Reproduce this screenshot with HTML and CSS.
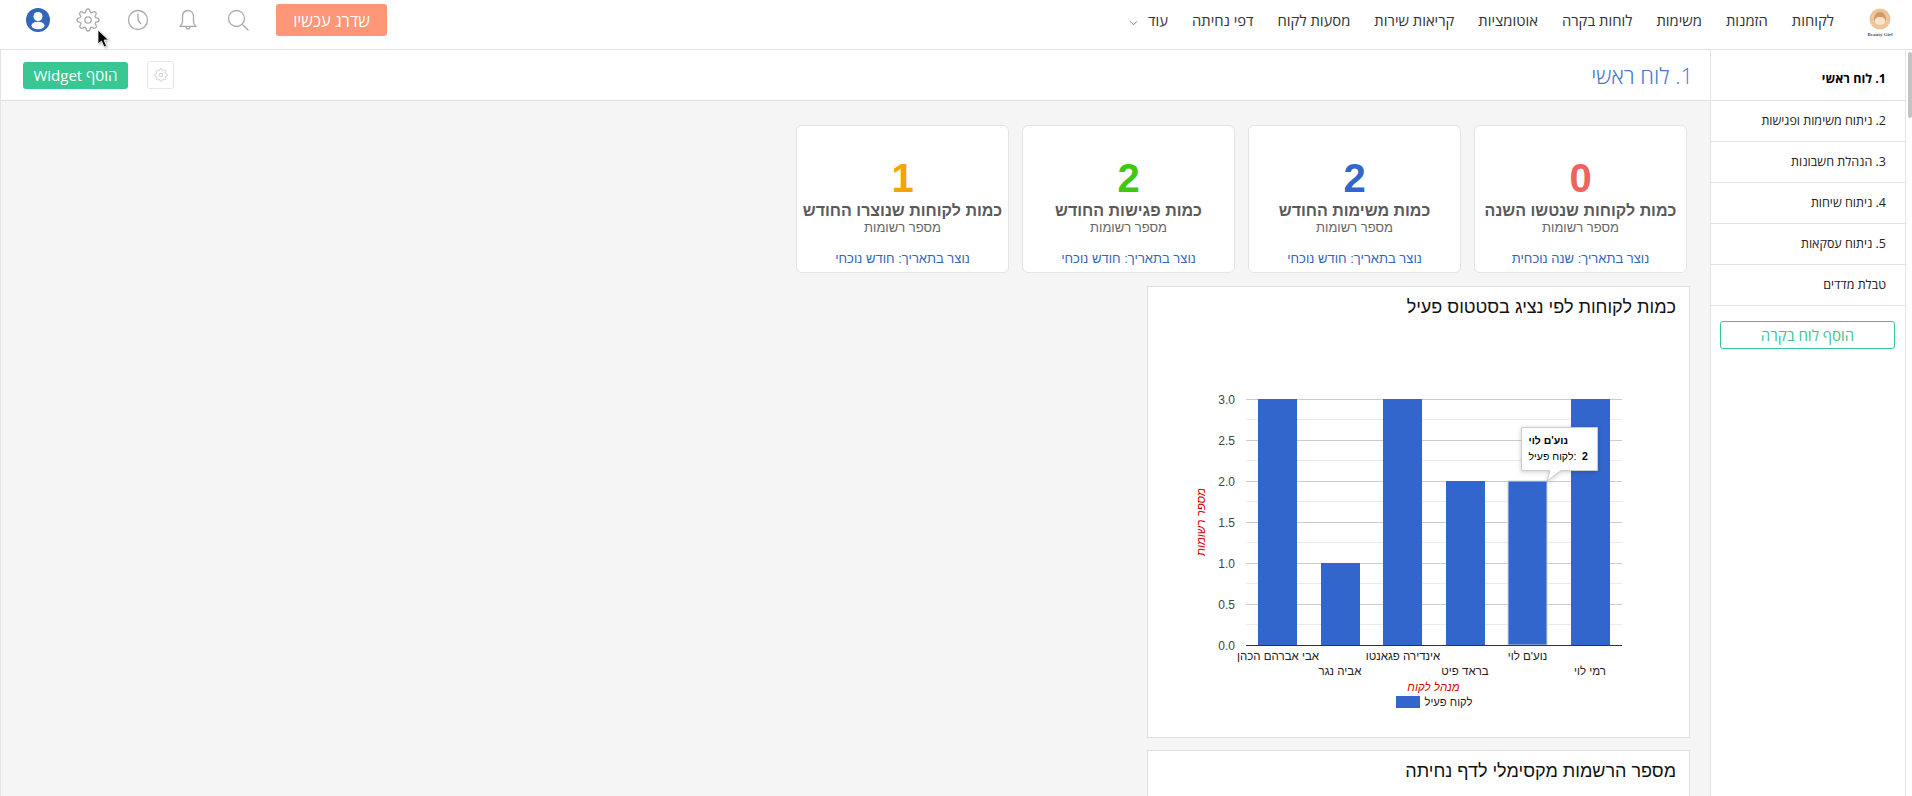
FILE: index.html
```html
<!DOCTYPE html>
<html lang="he" dir="rtl">
<head>
<meta charset="utf-8">
<title>לוח ראשי</title>
<link rel="stylesheet" href="styles.css">
</head>
<body>
<header class="topbar">
  <svg class="logo" viewBox="0 0 28 36" aria-label="Beauty Girl">
    <circle cx="14" cy="13" r="10.5" fill="#eec49a"/>
    <circle cx="14" cy="13" r="6" fill="#f8e3cf"/>
    <path d="M8 16c-1-7 3-10 6-10s7 3 6 10c-1-3-2-5-6-5s-5 2-6 5z" fill="#d59a63"/>
    <text x="14" y="30" class="logo-text">Beauty Girl</text>
  </svg>
  <nav class="nav">
    <a>לקוחות</a><a>הזמנות</a><a>משימות</a><a>לוחות בקרה</a><a>אוטומציות</a><a>קריאות שירות</a><a>מסעות לקוח</a><a>דפי נחיתה</a>
    <a class="nav-more">עוד
      <svg class="chevron" viewBox="0 0 10 6"><path d="M1 1l4 4 4-4"/></svg>
    </a>
  </nav>
  <div class="actions">
    <button class="upgrade">שדרג עכשיו</button>
    <svg class="icon" viewBox="0 0 24 24"><circle cx="10.5" cy="10.5" r="8"/><path d="M16.5 16.5l6 6"/></svg>
    <svg class="icon" viewBox="0 0 24 24"><path d="M12 2.5c-3.6 0-5.5 2.8-5.5 6.3v5.2c0 2-1.2 3.2-2.3 4.4h15.6c-1.1-1.2-2.3-2.4-2.3-4.4V8.800c0-3.500-1.900-6.300-5.500-6.300z"/><path d="M10 19c0 2.600 4 2.600 4 0"/></svg>
    <svg class="icon" viewBox="0 0 24 24"><circle cx="12" cy="12" r="9.500"/><path d="M12 5.500V12l3 4"/></svg>
    <svg class="icon" viewBox="0 0 24 24"><circle cx="12" cy="12" r="3.200"/><path d="M19.400 15a1.650 1.650 0 0 0 .33 1.820l.06.06a2 2 0 1 1-2.830 2.830l-.06-.06a1.650 1.650 0 0 0-2.800 1.170V21a2 2 0 1 1-4 0v-.09A1.650 1.650 0 0 0 7.300 19.740l-.06.06a2 2 0 1 1-2.830-2.830l.06-.06a1.650 1.650 0 0 0-1.170-2.800H3a2 2 0 1 1 0-4h.09A1.650 1.650 0 0 0 4.260 7.300l-.06-.06a2 2 0 1 1 2.830-2.830l.06.06a1.650 1.650 0 0 0 2.800-1.170V3a2 2 0 1 1 4 0v.09a1.650 1.650 0 0 0 2.800 1.170l.06-.06a2 2 0 1 1 2.830 2.830l-.06.06a1.650 1.650 0 0 0 1.170 2.800H21a2 2 0 1 1 0 4h-.09a1.650 1.650 0 0 0-1.510 1z"/></svg>
    <svg class="avatar" viewBox="0 0 24 24"><circle cx="12" cy="12" r="12" fill="#3366bb"/><circle cx="12" cy="8.500" r="4.500" fill="#fff"/><ellipse cx="12" cy="17.500" rx="6.500" ry="3.800" fill="#fff"/></svg>
  </div>
</header>

<div class="layout">
  <aside class="sidebar">
    <div class="side-inner">
      <a class="side-item side-item-active">1. לוח ראשי</a>
      <a class="side-item">2. ניתוח משימות ופגישות</a>
      <a class="side-item">3. הנהלת חשבונות</a>
      <a class="side-item">4. ניתוח שיחות</a>
      <a class="side-item">5. ניתוח עסקאות</a>
      <a class="side-item">טבלת מדדים</a>
      <button class="add-board">הוסף לוח בקרה</button>
    </div>
  </aside>

  <main class="content">
    <div class="subhead">
      <h1 class="page-title">1. לוח ראשי</h1>
      <button class="gear-btn">
        <svg class="gear-small" viewBox="0 0 24 24"><circle cx="12" cy="12" r="3.200"/><path d="M19.400 15a1.650 1.650 0 0 0 .33 1.820l.06.06a2 2 0 1 1-2.830 2.830l-.06-.06a1.650 1.650 0 0 0-2.800 1.170V21a2 2 0 1 1-4 0v-.09A1.650 1.650 0 0 0 7.300 19.740l-.06.06a2 2 0 1 1-2.830-2.830l.06-.06a1.650 1.650 0 0 0-1.170-2.800H3a2 2 0 1 1 0-4h.09A1.650 1.650 0 0 0 4.260 7.300l-.06-.06a2 2 0 1 1 2.830-2.830l.06.06a1.650 1.650 0 0 0 2.800-1.170V3a2 2 0 1 1 4 0v.09a1.650 1.650 0 0 0 2.800 1.170l.06-.06a2 2 0 1 1 2.830 2.830l-.06.06a1.650 1.650 0 0 0 1.170 2.800H21a2 2 0 1 1 0 4h-.09a1.650 1.650 0 0 0-1.510 1z"/></svg>
      </button>
      <button class="add-widget">הוסף Widget</button>
    </div>

    <div class="dashboard">
      <section class="cards">
        <article class="card">
          <div class="card-num num-red">0</div>
          <div class="card-title">כמות לקוחות שנטשו השנה</div>
          <div class="card-sub">מספר רשומות</div>
          <div class="card-foot">נוצר בתאריך: שנה נוכחית</div>
        </article>
        <article class="card">
          <div class="card-num num-blue">2</div>
          <div class="card-title">כמות משימות החודש</div>
          <div class="card-sub">מספר רשומות</div>
          <div class="card-foot">נוצר בתאריך: חודש נוכחי</div>
        </article>
        <article class="card">
          <div class="card-num num-green">2</div>
          <div class="card-title">כמות פגישות החודש</div>
          <div class="card-sub">מספר רשומות</div>
          <div class="card-foot">נוצר בתאריך: חודש נוכחי</div>
        </article>
        <article class="card">
          <div class="card-num num-orange">1</div>
          <div class="card-title">כמות לקוחות שנוצרו החודש</div>
          <div class="card-sub">מספר רשומות</div>
          <div class="card-foot">נוצר בתאריך: חודש נוכחי</div>
        </article>
      </section>

      <section class="panel panel-first">
        <h2 class="panel-title">כמות לקוחות לפי נציג בסטטוס פעיל</h2>
        <svg class="chart" viewBox="1148 326 541 410">
          <g class="grid-minor">
            <path d="M1246 419.500H1622M1246 460.500H1622M1246 501.500H1622M1246 542.500H1622M1246 583.500H1622M1246 624.500H1622"/>
          </g>
          <g class="grid-major">
            <path d="M1246 399.500H1622M1246 440.500H1622M1246 481.500H1622M1246 522.500H1622M1246 563.500H1622M1246 604.500H1622"/>
          </g>
          <g class="bars">
            <rect x="1258" y="399" width="39" height="246"/>
            <rect x="1321" y="563" width="39" height="82"/>
            <rect x="1383" y="399" width="39" height="246"/>
            <rect x="1446" y="481" width="39" height="164"/>
            <rect x="1508" y="481" width="39" height="164" class="bar-hover"/>
            <rect x="1571" y="399" width="39" height="246"/>
          </g>
          <path class="baseline" d="M1246 645.500H1622"/>
          <g class="y-labels">
            <text x="1235" y="404">3.0</text>
            <text x="1235" y="445">2.5</text>
            <text x="1235" y="486">2.0</text>
            <text x="1235" y="527">1.5</text>
            <text x="1235" y="568">1.0</text>
            <text x="1235" y="609">0.5</text>
            <text x="1235" y="650">0.0</text>
          </g>
          <g class="x-labels">
            <text x="1278" y="660">אבי אברהם הכהן</text>
            <text x="1340" y="675">אביה נגר</text>
            <text x="1403" y="660">אינדירה פגאנטו</text>
            <text x="1465" y="675">בראד פיט</text>
            <text x="1527.500" y="660">נוע'ם לוי</text>
            <text x="1590" y="675">רמי לוי</text>
          </g>
          <text class="axis-title" x="1433.500" y="691">מנהל לקוח</text>
          <text class="axis-title" transform="translate(1205 522) rotate(-90)">מספר רשומות</text>
          <rect class="legend-swatch" x="1396" y="696" width="24" height="12"/>
          <text class="legend-label" x="1424.500" y="706">לקוח פעיל</text>
          <g class="tooltip">
            <path class="tooltip-box" d="M1521.500 427.500H1597.500V470.500H1561L1547 481L1550 470.500H1521.500Z"/>
            <text class="tooltip-bold" x="1528.500" y="444">נוע'ם לוי</text>
            <text class="tooltip-text" x="1528.500" y="460">לקוח פעיל:</text>
            <text class="tooltip-bold" x="1582" y="460">2</text>
          </g>
        </svg>
      </section>

      <section class="panel">
        <h2 class="panel-title">מספר הרשמות מקסימלי לדף נחיתה</h2>
      </section>
    </div>
  </main>
</div>

<div class="scrollthumb"></div>
<svg class="cursor" viewBox="0 0 12 19"><path d="M1 1v14l3.500-3 2.500 6 2.500-1-2.500-6h4.500z"/></svg>
</body>
</html>
```
FILE: styles.css
```css
* { box-sizing: border-box; }

html, body {
  margin: 0;
  height: 796px;
  overflow: hidden;
  background: #fff;
  font-family: "Open Sans", "Liberation Sans", Arial, sans-serif;
  color: #111;
}

h1, h2 { margin: 0; font-weight: 400; }

button { font-family: inherit; cursor: pointer; }

/* Top bar */
.topbar {
  display: flex;
  align-items: center;
  height: 50px;
  padding: 0 18px 9px 0;
  border-bottom: 1px solid #e4e4e4;
  background: #fff;
}

.logo { width: 28px; height: 36px; flex: none; margin-top: 8px; }
.logo-text { font-family: "Liberation Serif", serif; font-size: 5px; font-weight: 700; fill: #555; text-anchor: middle; direction: ltr; }

.nav {
  display: flex;
  align-items: center;
  gap: 24px;
  margin-right: 32px;
  font-size: 14.8px;
  color: #333;
}

.nav-more { display: flex; align-items: center; gap: 10px; }
.chevron { width: 9px; height: 6px; margin-top: 5px; fill: none; stroke: #777; stroke-width: 1; }

.actions {
  display: flex;
  align-items: center;
  gap: 26px;
  margin-right: auto;
  padding-left: 26px;
}

.upgrade {
  width: 111px;
  height: 32px;
  border: 0;
  border-radius: 3px;
  background: #ff9678;
  color: #fff;
  font-size: 16.5px;
  padding: 0;
}

.icon { width: 24px; height: 24px; flex: none; fill: none; stroke: #aaa; stroke-width: 1.300; }
.avatar { width: 24px; height: 24px; flex: none; }

/* Layout */
.layout { display: flex; height: 746px; }

.sidebar {
  flex: none;
  width: 202px;
  padding-right: 6px;
  border-left: 1px solid #e4e4e4;
  background: #fff;
}

.side-inner {
  display: flex;
  flex-direction: column;
  height: 100%;
  border-right: 1px solid #e4e4e4;
}

.side-item {
  display: flex;
  align-items: center;
  height: 41px;
  padding: 0 19px 2px 0;
  border-bottom: 1px solid #e4e4e4;
  font-size: 12.5px;
  color: #222;
}

.side-item-active { height: 51px; padding-top: 9px; font-weight: 700; color: #000; }

.add-board {
  width: 175px;
  height: 28px;
  margin: 15px 10px 0 0;
  padding: 0;
  border: 1px solid #38c793;
  border-radius: 3px;
  background: #fff;
  color: #38c793;
  font-size: 15px;
}

.content {
  flex: 1;
  display: flex;
  flex-direction: column;
  min-width: 0;
  border-left: 1px solid #e4e4e4;
}

.subhead {
  flex: none;
  display: flex;
  align-items: center;
  height: 51px;
  padding: 0 17px 0 22px;
  border-bottom: 1px solid #e0e0e0;
  background: #fff;
}

.page-title { font-size: 22px; font-weight: 300; color: #4a78d6; margin-left: auto; }

.gear-btn {
  display: flex;
  align-items: center;
  justify-content: center;
  width: 27px;
  height: 28px;
  margin-left: 19px;
  padding: 0;
  border: 1px solid #e6e6e6;
  border-radius: 3px;
  background: #fff;
}

.gear-small { width: 14px; height: 14px; fill: none; stroke: #c4c4c4; stroke-width: 1.300; }

.add-widget {
  width: 105px;
  height: 27px;
  padding: 0;
  border: 0;
  border-radius: 3px;
  background: #38c793;
  color: #fff;
  font-size: 15px;
}

.dashboard {
  flex: 1;
  min-height: 0;
  overflow: hidden;
  padding-top: 24px;
  background: #f5f5f5;
}

.cards {
  display: flex;
  gap: 13px;
  padding-right: 23px;
  font-family: "Liberation Sans", Arial, sans-serif;
}

.card {
  display: flex;
  flex-direction: column;
  align-items: center;
  width: 213px;
  height: 148px;
  padding-top: 32px;
  border: 1px solid #e4e4e4;
  border-radius: 6px;
  background: #fff;
}

.card-num { font-size: 40px; font-weight: 700; line-height: 40px; }
.num-red { color: #f0625c; }
.num-blue { color: #3366cc; }
.num-green { color: #3ec80f; }
.num-orange { color: #f8a400; }

.card-title { margin-top: 4px; font-size: 16px; font-weight: 700; line-height: 18px; color: #5a5a5a; white-space: nowrap; }
.card-sub { font-size: 13px; line-height: 15px; color: #666; }
.card-foot { margin-top: auto; padding-bottom: 5px; font-size: 13px; line-height: 16px; color: #3366bb; }

.panel {
  width: 543px;
  height: 452px;
  margin: 12px 20px 0 0;
  border: 1px solid #dedede;
  background: #fff;
}

.panel-first { margin-top: 13px; }

.panel-title {
  height: 39px;
  padding: 5px 13px 0 0;
  font-family: "Liberation Sans", Arial, sans-serif;
  font-size: 18px;
  line-height: 30px;
  color: #111;
}

/* Chart */
.chart { display: block; width: 541px; height: 410px; direction: ltr; font-family: "Liberation Sans", Arial, sans-serif; font-size: 12px; }
.grid-minor path { fill: none; stroke: #ebebeb; }
.grid-major path { fill: none; stroke: #ccc; }
.bars rect { fill: #3366cc; }
.bars .bar-hover { stroke: #c9d3e6; stroke-width: 1; }
.baseline { fill: none; stroke: #333; }
.y-labels text { text-anchor: end; fill: #444; }
.x-labels text { text-anchor: middle; fill: #222; font-size: 11.5px; }
.axis-title { text-anchor: middle; font-style: italic; fill: #e00000; font-size: 11.5px; }
.legend-swatch { fill: #3366cc; }
.legend-label { fill: #222; font-size: 11.2px; }
.tooltip-box { fill: #fff; stroke: #ccc; filter: drop-shadow(0 1px 2px rgba(0, 0, 0, .2)); }
.tooltip-bold { font-weight: 700; fill: #000; font-size: 10.5px; }
.tooltip-text { fill: #000; font-size: 10.5px; }

/* Overlays */
.scrollthumb {
  position: absolute;
  top: 52px;
  left: 1908px;
  width: 4px;
  height: 66px;
  border-radius: 2px;
  background: #c4c4c4;
}

.cursor {
  position: absolute;
  top: 29px;
  left: 97px;
  width: 12px;
  height: 19px;
  fill: #000;
  stroke: #fff;
  stroke-width: .800;
  filter: drop-shadow(1px 1px 1px rgba(0, 0, 0, .3));
}
```
